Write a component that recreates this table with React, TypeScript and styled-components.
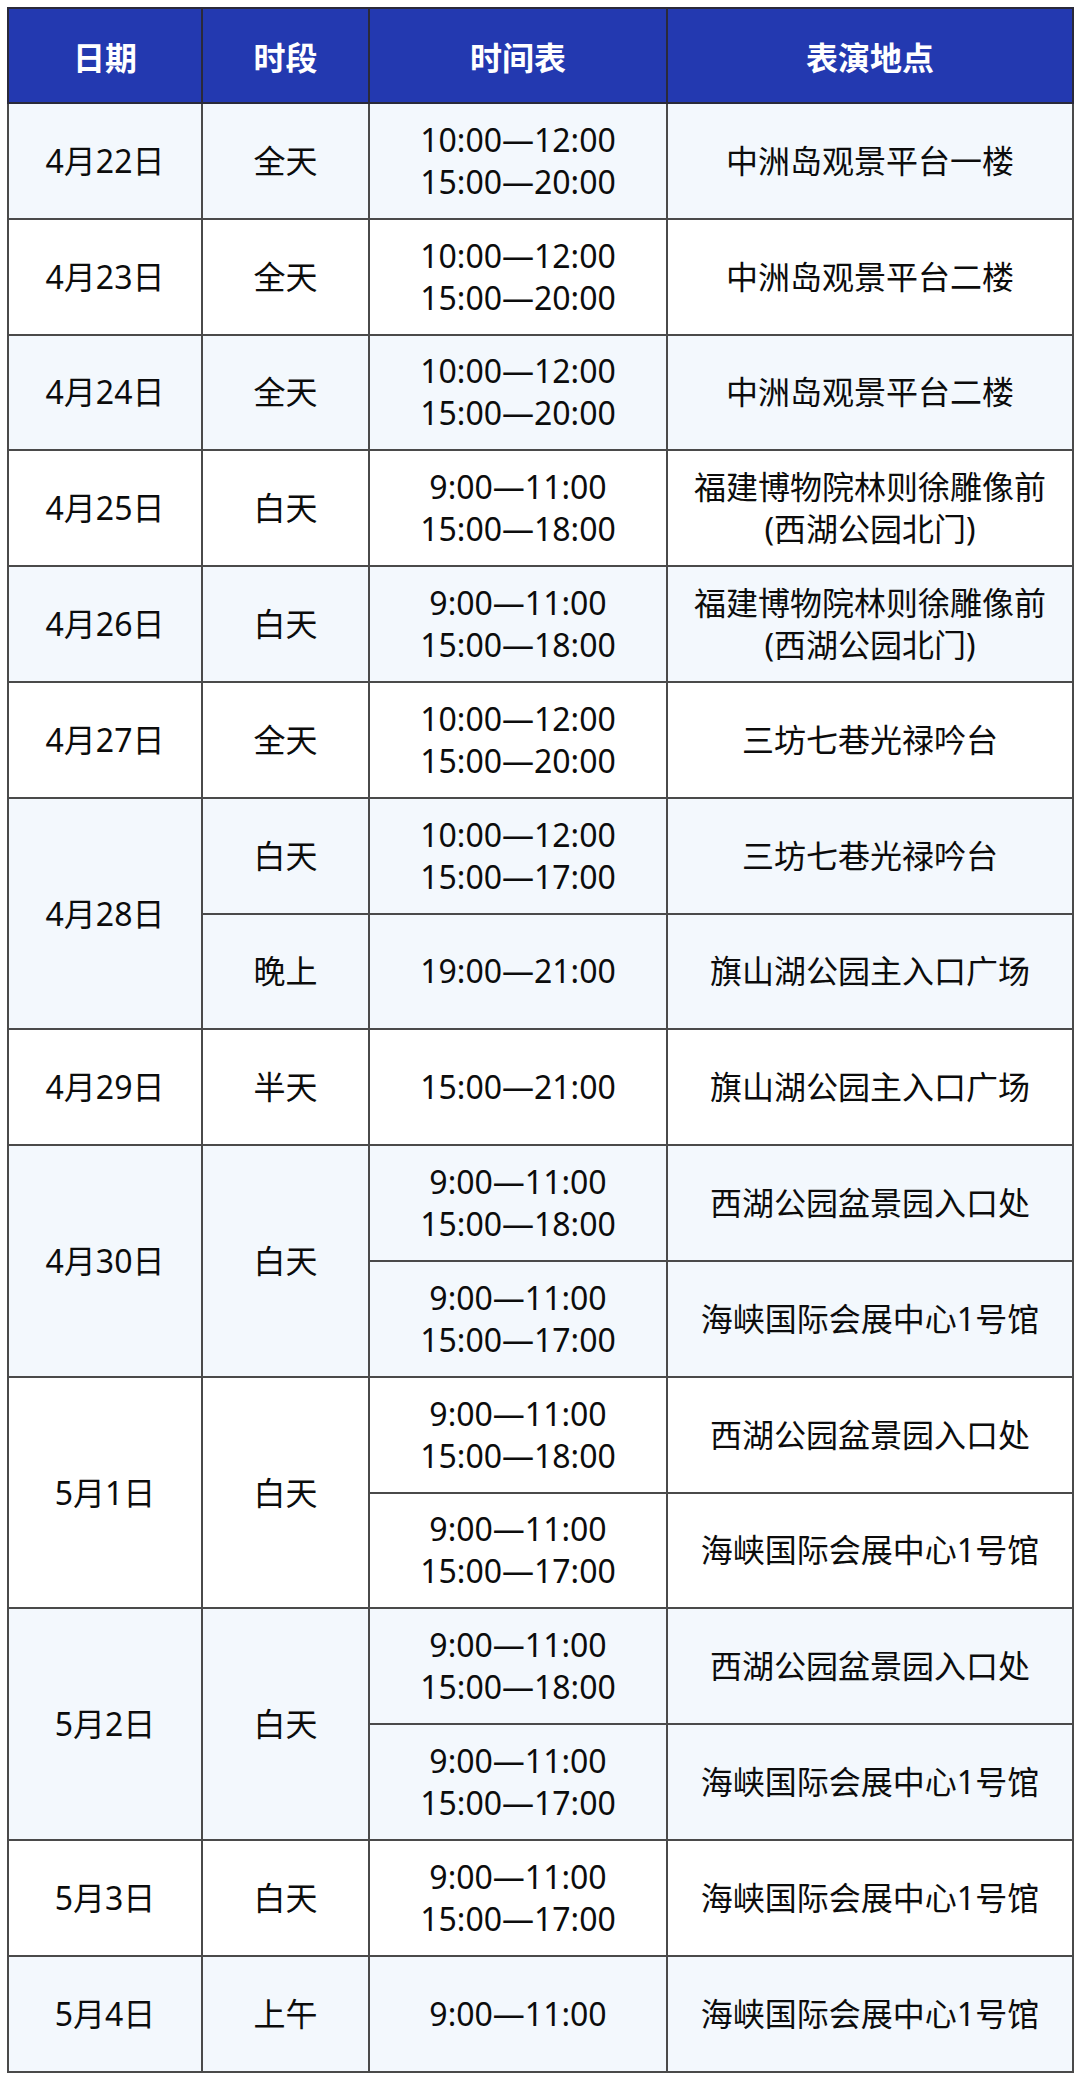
import React from 'react';
import styled, { createGlobalStyle } from 'styled-components';

interface Slot {
    times: string[];
    place: string[];
}

interface Period {
    label: string;
    slots: Slot[];
}

interface DayPlan {
    date: string;
    periods: Period[];
}

const GlobalStyle = createGlobalStyle`
    body {
        margin: 0;
        background: #ffffff;
        font-family: "Noto Sans", "Noto Sans CJK SC", sans-serif;
    }
`;

const Page = styled.div`
    padding: 7px 8px 8px 7px;
`;

const Table = styled.table`
    width: 1065px;
    border-collapse: collapse;
    table-layout: fixed;
    border: 2px solid #7a7a7a;
`;

const HeadCell = styled.th`
    height: 93px;
    padding: 0;
    background: #2339b0;
    color: #ffffff;
    font-size: 32px;
    font-weight: 700;
    text-align: center;
    vertical-align: middle;
    border: 2px solid #2a2a3a;
`;

const Cell = styled.td<{ $shade: boolean }>`
    height: 113.8px;
    padding: 0;
    background: ${(p) => (p.$shade ? '#f3f8fd' : '#ffffff')};
    color: #0c0c0c;
    font-size: 32px;
    line-height: 42px;
    text-align: center;
    vertical-align: middle;
    border: 2px solid #4a4a4a;
`;

const Line = styled.div`
    white-space: nowrap;
`;

const schedule: DayPlan[] = [
    { date: '4月22日', periods: [{ label: '全天', slots: [{ times: ['10:00—12:00', '15:00—20:00'], place: ['中洲岛观景平台一楼'] }] }] },
    { date: '4月23日', periods: [{ label: '全天', slots: [{ times: ['10:00—12:00', '15:00—20:00'], place: ['中洲岛观景平台二楼'] }] }] },
    { date: '4月24日', periods: [{ label: '全天', slots: [{ times: ['10:00—12:00', '15:00—20:00'], place: ['中洲岛观景平台二楼'] }] }] },
    { date: '4月25日', periods: [{ label: '白天', slots: [{ times: ['9:00—11:00', '15:00—18:00'], place: ['福建博物院林则徐雕像前', '(西湖公园北门)'] }] }] },
    { date: '4月26日', periods: [{ label: '白天', slots: [{ times: ['9:00—11:00', '15:00—18:00'], place: ['福建博物院林则徐雕像前', '(西湖公园北门)'] }] }] },
    { date: '4月27日', periods: [{ label: '全天', slots: [{ times: ['10:00—12:00', '15:00—20:00'], place: ['三坊七巷光禄吟台'] }] }] },
    {
        date: '4月28日',
        periods: [
            { label: '白天', slots: [{ times: ['10:00—12:00', '15:00—17:00'], place: ['三坊七巷光禄吟台'] }] },
            { label: '晚上', slots: [{ times: ['19:00—21:00'], place: ['旗山湖公园主入口广场'] }] },
        ],
    },
    { date: '4月29日', periods: [{ label: '半天', slots: [{ times: ['15:00—21:00'], place: ['旗山湖公园主入口广场'] }] }] },
    {
        date: '4月30日',
        periods: [
            {
                label: '白天',
                slots: [
                    { times: ['9:00—11:00', '15:00—18:00'], place: ['西湖公园盆景园入口处'] },
                    { times: ['9:00—11:00', '15:00—17:00'], place: ['海峡国际会展中心1号馆'] },
                ],
            },
        ],
    },
    {
        date: '5月1日',
        periods: [
            {
                label: '白天',
                slots: [
                    { times: ['9:00—11:00', '15:00—18:00'], place: ['西湖公园盆景园入口处'] },
                    { times: ['9:00—11:00', '15:00—17:00'], place: ['海峡国际会展中心1号馆'] },
                ],
            },
        ],
    },
    {
        date: '5月2日',
        periods: [
            {
                label: '白天',
                slots: [
                    { times: ['9:00—11:00', '15:00—18:00'], place: ['西湖公园盆景园入口处'] },
                    { times: ['9:00—11:00', '15:00—17:00'], place: ['海峡国际会展中心1号馆'] },
                ],
            },
        ],
    },
    { date: '5月3日', periods: [{ label: '白天', slots: [{ times: ['9:00—11:00', '15:00—17:00'], place: ['海峡国际会展中心1号馆'] }] }] },
    { date: '5月4日', periods: [{ label: '上午', slots: [{ times: ['9:00—11:00'], place: ['海峡国际会展中心1号馆'] }] }] },
];

const renderDay = (day: DayPlan, index: number) => {
    const shade = index % 2 === 0;
    const total = day.periods.reduce((n, p) => n + p.slots.length, 0);
    const rows: React.ReactNode[] = [];

    day.periods.forEach((period, pi) => {
        period.slots.forEach((slot, si) => {
            rows.push(
                <tr key={`${day.date}-${pi}-${si}`}>
                    {pi === 0 && si === 0 && (
                        <Cell $shade={shade} rowSpan={total}>
                            {day.date}
                        </Cell>
                    )}
                    {si === 0 && (
                        <Cell $shade={shade} rowSpan={period.slots.length}>
                            {period.label}
                        </Cell>
                    )}
                    <Cell $shade={shade}>
                        {slot.times.map((t) => (
                            <Line key={t}>{t}</Line>
                        ))}
                    </Cell>
                    <Cell $shade={shade}>
                        {slot.place.map((p) => (
                            <Line key={p}>{p}</Line>
                        ))}
                    </Cell>
                </tr>
            );
        });
    });

    return rows;
};

const App: React.FC = () => {
    return (
        <Page>
            <GlobalStyle />
            <Table>
                <colgroup>
                    <col style={{ width: 194 }} />
                    <col style={{ width: 167 }} />
                    <col style={{ width: 298 }} />
                    <col style={{ width: 406 }} />
                </colgroup>
                <thead>
                    <tr>
                        <HeadCell>日期</HeadCell>
                        <HeadCell>时段</HeadCell>
                        <HeadCell>时间表</HeadCell>
                        <HeadCell>表演地点</HeadCell>
                    </tr>
                </thead>
                <tbody>{schedule.map(renderDay)}</tbody>
            </Table>
        </Page>
    );
};

export default App;
